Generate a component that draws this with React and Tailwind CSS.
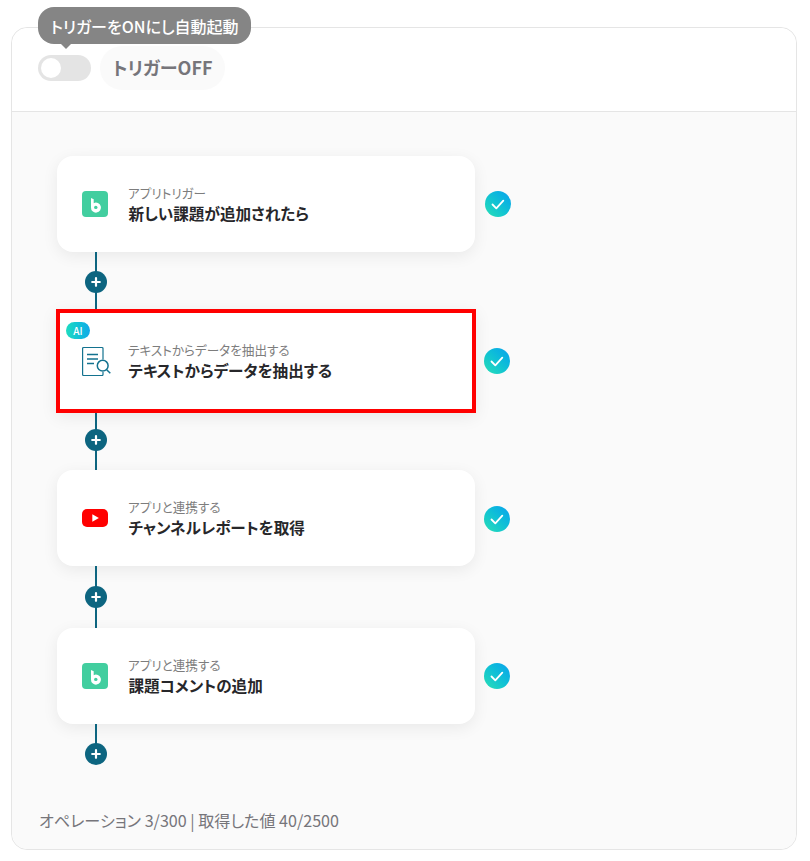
const Backlog = () => (
  <svg width="26" height="26" viewBox="0 0 26 26">
    <rect width="26" height="26" rx="4" fill="#42ce9f" />
    <path d="M9 7l2.7 1.2v4a5 5 0 1 1-2.7 4.2z" fill="#fff" />
    <circle cx="13.8" cy="16.4" r="1.7" fill="#42ce9f" />
  </svg>
);

const YouTube = () => (
  <svg width="26" height="18" viewBox="0 0 26 18">
    <rect width="26" height="18" rx="5" fill="#ff0000" />
    <path d="M10.3 5.2v7.6l6.6-3.8z" fill="#fff" />
  </svg>
);

const Doc = () => (
  <svg width="30" height="30" viewBox="0 0 30 30" fill="none" stroke="#13728f" strokeWidth="1.2">
    <path d="M21 13.5V2.5a1 1 0 0 0-1-1H1.6a1 1 0 0 0-1 1v26a1 1 0 0 0 1 1H20a1 1 0 0 0 1-1V26" />
    <path d="M5 8.5h11M5 13h11M5 17.5h7" strokeWidth="1.3" />
    <circle cx="20.7" cy="19.7" r="5.4" strokeWidth="1.5" />
    <path d="M24.7 23.7l3.6 3.6" strokeWidth="1.5" />
  </svg>
);

const Check = ({ className }) => (
  <div className={"flex h-[26px] w-[26px] shrink-0 items-center justify-center rounded-full bg-linear-to-tr from-[#2ae0b4] to-[#10a0ee] " + className}>
    <svg width="14" height="11" viewBox="0 0 14 11" fill="none" stroke="#fff" strokeWidth="1.8" strokeLinecap="round" strokeLinejoin="round">
      <path d="M1.5 5.5l3.8 3.8 7-7.6" />
    </svg>
  </div>
);

const Plus = ({ heightClass, topClass }) => (
  <div className="flex w-[418px] flex-col pl-[38px]">
    <div className={"relative w-[2px] bg-[#0d6580] " + heightClass}>
      <div className={"absolute left-[-10px] flex h-[22px] w-[22px] items-center justify-center rounded-full bg-[#0d6580] " + topClass}>
        <svg width="10" height="10" viewBox="0 0 10 10" stroke="#fff" strokeWidth="2.2" strokeLinecap="round">
          <path d="M5 1.2v7.6M1.2 5h7.6" />
        </svg>
      </div>
    </div>
  </div>
);

const Step = ({ icon, small, title, ai, checkClass }) => (
  <div className="flex items-center">
    <div
      className={
        "relative flex items-center bg-white shadow-[0_4px_16px_rgba(0,0,0,0.07)] " +
        (ai ? "ml-[-1px] h-[104px] w-[420px] border-4 border-[#ff0000] pl-[22px]" : "h-[96px] w-[418px] rounded-2xl pl-[25px]")
      }
    >
      {ai && (
        <div className="absolute left-[6px] top-[9px] flex h-[17px] w-[24px] items-center justify-center rounded-full bg-linear-to-r from-[#1fdcc0] to-[#14a8e8] text-[10px] font-medium leading-none text-white">
          AI
        </div>
      )}
      <div className="w-[46px] shrink-0">{icon}</div>
      <div className="flex flex-col pt-[1px]">
        <div className="text-[12.6px] leading-[17px] text-[#7d7d7d]">{small}</div>
        <div className="ml-[0.5px] text-[15.6px] font-bold leading-[25px] text-[#27272a]">{title}</div>
      </div>
    </div>
    <Check className={checkClass} />
  </div>
);

export default function App() {
  return (
    <div
      className="h-[861px] w-[810px] bg-white px-[11px] pb-[11px] pt-[27px] [font-feature-settings:'palt']"
      style={{ fontFamily: '"Noto Sans CJK JP", "Noto Sans", sans-serif' }}
    >
      <div className="flex h-[823px] w-[786px] flex-col rounded-2xl border border-[#e5e5e5]">
        <div className="relative flex h-[84px] shrink-0 items-center gap-[9px] rounded-t-2xl border-b border-[#e5e5e5] bg-white pb-[4px] pl-[26px]">
          <div className="absolute left-[26px] top-[-21px] flex h-[37px] w-[213px] items-center justify-center rounded-2xl bg-[#858585] text-[16px] font-medium text-white">
            トリガーをONにし自動起動
            <div className="absolute bottom-[-5px] left-[22px] h-0 w-0 border-x-[6px] border-t-[6px] border-x-transparent border-t-[#858585]" />
          </div>
          <div className="flex h-[26px] w-[53px] items-center rounded-full bg-[#e4e4e4] pl-[3px]">
            <div className="h-5 w-5 rounded-full bg-white" />
          </div>
          <div className="flex h-[44px] w-[125px] items-center justify-center rounded-full bg-[#fafafa] text-[18px] font-bold text-[#76757a]">
            トリガーOFF
          </div>
        </div>
        <div className="relative flex flex-1 flex-col rounded-b-2xl bg-[#fafafa] pl-[45px] pt-[44px]">
          <Step icon={<Backlog />} small="アプリトリガー" title="新しい課題が追加されたら" checkClass="ml-[10px]" />
          <Plus heightClass="h-[57px]" topClass="top-[19px]" />
          <Step ai icon={<Doc />} small="テキストからデータを抽出する" title="テキストからデータを抽出する" checkClass="ml-[8px]" />
          <Plus heightClass="h-[57px]" topClass="top-[16px]" />
          <Step icon={<YouTube />} small="アプリと連携する" title="チャンネルレポートを取得" checkClass="ml-[9px] mt-[2px]" />
          <Plus heightClass="h-[62px]" topClass="top-[20px]" />
          <Step icon={<Backlog />} small="アプリと連携する" title="課題コメントの追加" checkClass="ml-[9px]" />
          <Plus heightClass="h-[30px]" topClass="top-[19px]" />
          <div className="ml-[-18px] mt-auto pb-[18px] text-[16.1px] leading-[22px] text-[#76757a]">
            オペレーション 3/300 | 取得した値 40/2500
          </div>
        </div>
      </div>
    </div>
  );
}
